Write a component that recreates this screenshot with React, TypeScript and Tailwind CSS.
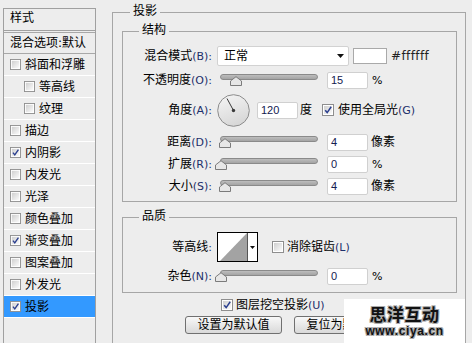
import React from "react";

const FONT = "font-['DejaVu_Sans','Noto_Sans_CJK_SC',sans-serif]";

function Check(props: { on?: boolean; size?: number }) {
  const s = props.size ?? 12;
  return (
    <svg width={s} height={s} viewBox="0 0 12 12" className="shrink-0">
      <defs>
        <linearGradient id="cbfill" x1="0" y1="0" x2="1" y2="1">
          <stop offset="0" stopColor="#cfcfcf" />
          <stop offset="1" stopColor="#fbfbfb" />
        </linearGradient>
      </defs>
      <rect x="0.5" y="0.5" width="11" height="11" fill="#fff" stroke="#8e8e8e" />
      <rect x="2" y="2" width="8" height="8" fill="url(#cbfill)" />
      {props.on && (
        <path d="M3.2 6.2 L5.2 8.6 L9.2 2.8" fill="none" stroke="#2b3f8f" strokeWidth="1.5" />
      )}
    </svg>
  );
}

function Slider(props: { at: number }) {
  return (
    <div className="relative w-[104px] h-[22px] shrink-0">
      <div className="absolute left-[4px] top-[5px] w-[98px] h-[6px] rounded-full border border-[#8a8a8a] bg-gradient-to-b from-[#bdbdbd] to-[#a4a4a4]" />
      <svg
        className="absolute top-[7px]"
        style={{ left: 4 + props.at - 6 }}
        width="12"
        height="10"
        viewBox="0 0 12 10"
      >
        <path d="M0.5 9.5 V5 L6 0.7 L11.5 5 V9.5 Z" fill="#e6e6e6" stroke="#7b7b7b" />
      </svg>
    </div>
  );
}

function Num(props: { v: string }) {
  return (
    <div className="w-[41px] h-[17px] shrink-0 bg-white border border-[#d0d0d0] rounded-[2px] flex items-center pl-[3px] text-[11px] font-['Liberation_Sans',sans-serif] text-[#142050]">
      {props.v}
    </div>
  );
}

function Label(props: { text: string; m?: string }) {
  return (
    <div className="w-[89px] shrink-0 text-right whitespace-nowrap">
      {props.text}
      <span className="text-[11px] text-[#1d2f6b]">{props.m ? `(${props.m}):` : ":"}</span>
    </div>
  );
}

function Unit(props: { t: string }) {
  return <span className="ml-[3px] whitespace-nowrap">{props.t}</span>;
}

function SliderRow(props: { text: string; m: string; at: number; v: string; unit: string }) {
  return (
    <div className="flex items-center h-[22px]">
      <Label text={props.text} m={props.m} />
      <div className="ml-[4px]">
        <Slider at={props.at} />
      </div>
      <div className="ml-[7px]">
        <Num v={props.v} />
      </div>
      {props.unit === "%" ? (
        <span className="ml-[4px] text-[11px]">%</span>
      ) : (
        <Unit t={props.unit} />
      )}
    </div>
  );
}

const sideItems: { name: string; on?: boolean; sub?: boolean; sel?: boolean }[] = [
  { name: "斜面和浮雕" },
  { name: "等高线", sub: true },
  { name: "纹理", sub: true },
  { name: "描边" },
  { name: "内阴影", on: true },
  { name: "内发光" },
  { name: "光泽" },
  { name: "颜色叠加" },
  { name: "渐变叠加", on: true },
  { name: "图案叠加" },
  { name: "外发光" },
  { name: "投影", on: true, sel: true },
];

export default function App() {
  return (
    <div className={`relative w-[472px] h-[343px] overflow-hidden bg-[#ededed] text-[12px] text-black leading-none flex ${FONT}`}>
      {/* styles list */}
      <div className="ml-[3px] mt-[8px] w-[93px] h-[345px] shrink-0 border border-[#a0a0a0] flex flex-col">
        <div className="h-[22px] border-b border-[#a0a0a0] pl-[6px] pt-[3px]">样式</div>
        <div className="h-[1px]" />
        <div className="h-[22px] border-t border-b border-[#a8a8a8] pl-[6px] flex items-center whitespace-nowrap">
          混合选项:默认
        </div>
        {sideItems.map((it) => (
          <div
            key={it.name}
            className={`h-[22px] border-b border-white flex items-center whitespace-nowrap ${
              it.sub ? "pl-[20px]" : "pl-[6px]"
            } ${it.sel ? "bg-[#3399ff]" : ""}`}
          >
            <Check on={it.on} size={11} />
            <span className="ml-[4px]">{it.name}</span>
          </div>
        ))}
      </div>

      {/* drop shadow group */}
      <div className="relative ml-[16px] mt-[12px] w-[354px] h-[345px] shrink-0 border border-[#a6a6a6] pl-[9px] pr-[8px] pt-[18px]">
        <span className="absolute left-[17px] top-[-10px] px-[3px] h-[16px] leading-[16px] bg-[#ededed]">投影</span>

        {/* 结构 */}
        <div className="relative border border-[#a6a6a6] pt-[13px] pb-[4px]">
          <span className="absolute left-[16px] top-[-10px] px-[3px] h-[16px] leading-[16px] bg-[#ededed]">结构</span>

          <div className="flex items-center h-[21px]">
            <Label text="混合模式" m="B" />
            <div className="ml-[5px] w-[132px] h-[20px] bg-white border border-[#d2d2d2] rounded-[2px] flex items-center justify-between pl-[6px] pr-[4px]">
              <span>正常</span>
              <svg width="7" height="4" viewBox="0 0 7 4">
                <path d="M0 0 H7 L3.5 4 Z" fill="#111" />
              </svg>
            </div>
            <div className="ml-[4px] w-[34px] h-[16px] bg-white border border-[#a9a9a9]" />
            <span className="ml-[4px] text-[12px] tracking-[0.4px] text-[#222]">#ffffff</span>
          </div>

          <div className="mt-[3px]">
            <SliderRow text="不透明度" m="O" at={15.5} v="15" unit="%" />
          </div>

          <div className="mt-[2px] flex items-center h-[34px]">
            <Label text="角度" m="A" />
            <svg className="ml-[5px] shrink-0" width="33" height="33" viewBox="0 0 33 33">
              <defs>
                <linearGradient id="dial" x1="0" y1="0" x2="0.4" y2="1">
                  <stop offset="0" stopColor="#f6f6f6" />
                  <stop offset="1" stopColor="#d8d8d8" />
                </linearGradient>
              </defs>
              <circle cx="16.5" cy="16.5" r="15.8" fill="url(#dial)" stroke="#8c8c8c" />
              <line x1="16.5" y1="16.5" x2="10" y2="4.5" stroke="#3a3a3a" strokeWidth="1" />
              <circle cx="16.5" cy="16.5" r="1.7" fill="#3a3a3a" />
            </svg>
            <div className="ml-[7px]">
              <Num v="120" />
            </div>
            <span className="ml-[2px]">度</span>
            <div className="ml-[10px] flex items-center">
              <Check on />
            </div>
            <span className="ml-[4px] whitespace-nowrap">
              使用全局光<span className="text-[11px] text-[#1d2f6b]">(G)</span>
            </span>
          </div>

          <div className="mt-[4px]">
            <SliderRow text="距离" m="D" at={4.5} v="4" unit="像素" />
          </div>
          <SliderRow text="扩展" m="R" at={0.5} v="0" unit="%" />
          <SliderRow text="大小" m="S" at={5} v="4" unit="像素" />
        </div>

        {/* 品质 */}
        <div className="relative mt-[15px] border border-[#a6a6a6] pt-[14px] pb-[5px]">
          <span className="absolute left-[16px] top-[-10px] px-[3px] h-[16px] leading-[16px] bg-[#ededed]">品质</span>

          <div className="flex items-center h-[30px]">
            <Label text="等高线" />
            <div className="ml-[5px] w-[41px] h-[30px] border border-black bg-white flex shrink-0">
              <svg width="29" height="28" viewBox="0 0 29 28" className="shrink-0">
                <polygon points="2,28 29,0 29,28" fill="#a3a3a3" />
              </svg>
              <div className="flex-1 border-l border-[#555] flex items-center justify-center">
                <svg width="5" height="3" viewBox="0 0 5 3">
                  <path d="M0 0 H5 L2.5 3 Z" fill="#111" />
                </svg>
              </div>
            </div>
            <div className="ml-[14px] flex items-center">
              <Check />
            </div>
            <span className="ml-[3px] whitespace-nowrap">
              消除锯齿<span className="text-[11px] text-[#1d2f6b]">(L)</span>
            </span>
          </div>

          <div className="mt-[3px]">
            <SliderRow text="杂色" m="N" at={0.5} v="0" unit="%" />
          </div>
        </div>

        <div className="mt-[5px] h-[14px] flex items-center pl-[99px]">
          <Check on />
          <span className="ml-[3px] whitespace-nowrap">
            图层挖空投影<span className="text-[11px] text-[#1d2f6b]">(U)</span>
          </span>
        </div>

        <div className="mt-[4px] flex pl-[63px] gap-[12px]">
          <button className="w-[97px] h-[18px] rounded-[3px] border border-[#707070] bg-gradient-to-b from-[#f8f8f8] to-[#d9d9d9] flex items-center justify-center">
            设置为默认值
          </button>
          <button className="w-[97px] h-[18px] rounded-[3px] border border-[#707070] bg-gradient-to-b from-[#f8f8f8] to-[#d9d9d9] flex items-center justify-center">
            复位为默认值
          </button>
        </div>
      </div>

      {/* watermark */}
      <div className="absolute left-[344px] top-[299px] w-[121px] h-[44px] bg-white flex flex-col items-center pt-[8px]">
        <span className="text-[17px] font-bold leading-[17px] tracking-[0.5px] text-[#111] [text-shadow:1px_1px_0_#aaa,-1px_-1px_0_#aaa,1px_-1px_0_#aaa,-1px_1px_0_#aaa]">
          思洋互动
        </span>
        <span className="mt-[1px] text-[12px] font-bold leading-[12px] tracking-[0.6px] text-[#111] font-['Liberation_Sans',sans-serif] [text-shadow:1px_1px_0_#aaa,-1px_-1px_0_#aaa,1px_-1px_0_#aaa,-1px_1px_0_#aaa]">
          www.ciya.cn
        </span>
      </div>
    </div>
  );
}
